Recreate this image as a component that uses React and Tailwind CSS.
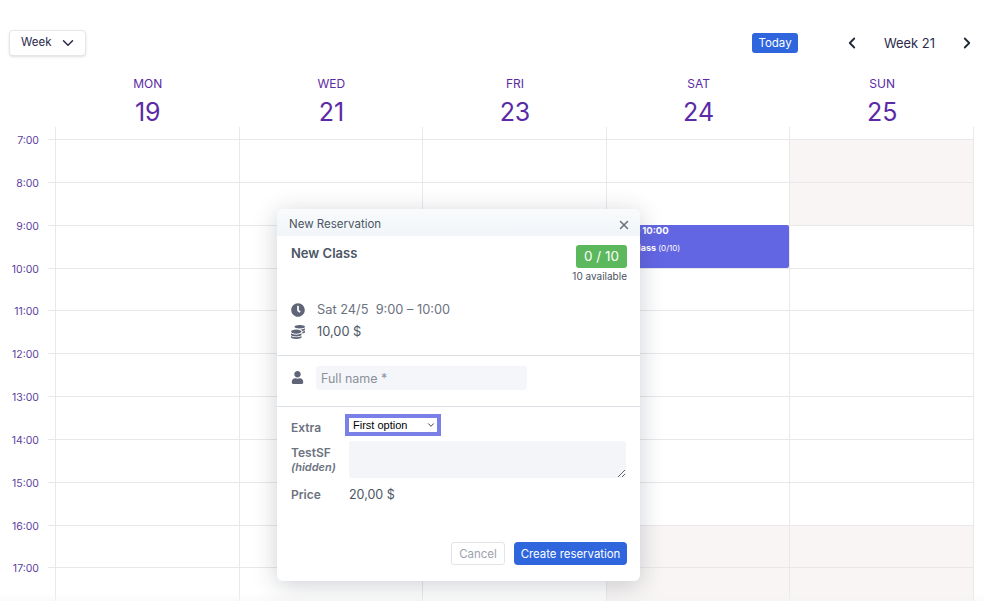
import React from "react";
import { ChevronDown, ChevronLeft, ChevronRight, X } from "lucide-react";
import { FaClock, FaCoins, FaUser } from "react-icons/fa";

const days = [
  ["MON", "19"],
  ["WED", "21"],
  ["FRI", "23"],
  ["SAT", "24"],
  ["SUN", "25"],
];
const hours = ["7:00", "8:00", "9:00", "10:00", "11:00", "12:00", "13:00", "14:00", "15:00", "16:00", "17:00"];
const shaded = {
  SAT: [9, 10, 11],
  SUN: [0, 1, 9, 10, 11],
};

function DayColumn({ name }) {
  const marks = shaded[name] || [];
  return (
    <div className="relative flex-1 min-w-0 border-r border-[#e9e9ec] pt-[12px]">
      {[...hours, ""].map((h, i) => (
        <div
          key={i}
          className={`h-[42.85px] border-t border-[#e8e8eb] ${marks.includes(i) ? "bg-[#f8f5f4]" : "bg-white"}`}
        />
      ))}
      {name === "SAT" && (
        <div className="absolute left-0 right-0 top-[98px] h-[43px] rounded-[2px] bg-[#6366e3] pl-[3px] text-white">
          <div className="pl-[1px] text-[9.5px] font-bold leading-[11px] whitespace-nowrap">9:00 – 10:00</div>
          <div className="mt-[6px] text-[9px] font-bold leading-[12px] whitespace-nowrap">
            New Class <span className="text-[8px] font-normal">(0/10)</span>
          </div>
        </div>
      )}
    </div>
  );
}

export default function App() {
  return (
    <div className="relative h-[601px] w-[984px] overflow-hidden bg-white font-['Inter',sans-serif]">
      <div className="flex items-center pl-[9px] pr-[8px] pt-[30px]">
        <button className="flex h-[26px] w-[77px] items-center rounded-[4px] border border-[#e5e7eb] bg-white pl-[11px] text-[11.5px] text-[#2b2a4c] shadow-sm">
          Week
          <ChevronDown className="ml-[8px] h-[18px] w-[18px]" strokeWidth={2} />
        </button>
        <button className="ml-auto h-[20px] w-[46px] rounded-[3px] bg-[#2f66de] pt-[1px] text-[11.5px] text-white">Today</button>
        <ChevronLeft className="ml-[45px] h-[18px] w-[18px] text-[#1f2937]" strokeWidth={2.4} />
        <span className="w-[97px] pt-[1px] text-center text-[12.9px] text-[#2b2a4c]">Week 21</span>
        <ChevronRight className="h-[18px] w-[18px] text-[#1f2937]" strokeWidth={2.4} />
      </div>

      <div className="ml-[56px] mr-[10px] mt-[20px] flex">
        {days.map(([d, n]) => (
          <div key={d} className="flex-1 text-center text-[#5b2aa6]">
            <div className="text-[12px] leading-[15px]">{d}</div>
            <div className="mt-[6px] text-[25px] leading-[30px]">{n}</div>
          </div>
        ))}
      </div>

      <div className="mr-[10px] flex">
        <div className="w-[56px] shrink-0 border-r border-[#e9e9ec] pt-[12px]">
          {hours.map((h) => (
            <div key={h} className="relative h-[42.85px]">
              <span className="absolute right-[16px] top-[-5px] text-[10.5px] leading-[13px] text-[#5b3fa0]">{h}</span>
              <div className="absolute left-[48px] right-0 top-0 h-px bg-[#e8e8eb]" />
            </div>
          ))}
        </div>
        {days.map(([d]) => (
          <DayColumn key={d} name={d} />
        ))}
      </div>

      <div className="absolute left-0 right-0 bottom-0 h-[8px] bg-gradient-to-b from-transparent to-[#f4f4f4]/50" />

      <div className="absolute left-[277px] top-[209px] w-[363px] rounded-[6px] bg-white shadow-[0_4px_24px_rgba(30,41,59,0.22)]">
        <div className="flex h-[27px] items-center justify-between rounded-t-[6px] bg-gradient-to-b from-[#f9fbfc] to-[#f1f5f9] pl-[12px] pr-[9px] pt-[4px] text-[11.5px] text-[#4b5563]">
          New Reservation
          <X className="h-[14px] w-[14px] text-[#6b7280]" strokeWidth={2.6} />
        </div>

        <div className="flex items-start justify-between pl-[14px] pr-[13px] pt-[9px]">
          <div className="text-[13px] font-semibold leading-[16px] text-[#4b5563]">New Class</div>
          <div className="flex flex-col items-end">
            <div className="flex h-[23px] w-[51px] items-center justify-center rounded-[3px] bg-[#5cb85c] text-[13.5px] text-white">0 / 10</div>
            <div className="mt-[2px] text-[10px] leading-[13px] text-[#4b5563]">10 available</div>
          </div>
        </div>

        <div className="flex flex-col gap-[6px] px-[14px] pt-[19px] text-[12.8px] text-[#6b7280]">
          <div className="flex h-[16px] items-center">
            <FaClock className="h-[14px] w-[14px] text-[#5f6477]" />
            <span className="ml-[12px] whitespace-pre">Sat 24/5  9:00 – 10:00</span>
          </div>
          <div className="flex h-[16px] items-center text-[#4b5563]">
            <FaCoins className="h-[14px] w-[14px] text-[#5f6477]" />
            <span className="ml-[12px]">10,00 $</span>
          </div>
        </div>

        <div className="mt-[15px] flex items-center border-t border-[#dcdfe4] px-[14px] pb-[16px] pt-[10px]">
          <FaUser className="mb-[2px] h-[13px] w-[13px] text-[#5f6477]" />
          <input
            placeholder="Full name *"
            className="ml-[12px] h-[24px] w-[211px] rounded-[3px] bg-[#f5f6fa] px-[5px] text-[12.5px] text-[#4b5563] placeholder:text-[#8b909a] outline-none"
          />
        </div>

        <div className="border-t border-[#dcdfe4] px-[14px] pt-[7px]">
          <div className="flex items-start">
            <div className="w-[54px] pt-[7px] text-[12px] font-semibold leading-[14px] text-[#6b7280]">Extra</div>
            <div className="relative h-[22px] w-[96px] border-[4px] border-[#7b7fe8] bg-white">
              <select className="block h-[14px] w-full appearance-none bg-white pl-[4px] font-['Liberation_Sans',sans-serif] text-[11px] leading-[14px] text-black outline-none" defaultValue="First option">
                <option>First option</option>
              </select>
              <ChevronDown className="pointer-events-none absolute right-[1px] top-[2px] h-[10px] w-[10px] text-[#222]" strokeWidth={2} />
            </div>
          </div>
          <div className="mt-[5px] flex items-start">
            <div className="w-[58px] shrink-0 pt-[5px]">
              <div className="text-[12px] font-semibold leading-[14px] text-[#6b7280]">TestSF</div>
              <div className="mt-[1px] text-[11px] font-semibold italic leading-[13px] text-[#6b7280]">(hidden)</div>
            </div>
            <textarea className="h-[37px] flex-1 rounded-[3px] bg-[#f3f5f9] outline-none" />
          </div>
          <div className="mt-[9px] flex items-center">
            <div className="w-[58px] text-[12px] font-semibold leading-[16px] text-[#6b7280]">Price</div>
            <div className="text-[12.5px] leading-[16px] text-[#4b5563]">20,00 $</div>
          </div>
        </div>

        <div className="mt-[39px] flex justify-end gap-[9px] px-[13px] pb-[16px]">
          <button className="h-[23px] w-[54px] rounded-[3px] border border-[#e2e4e8] bg-white pt-[2px] text-[11.5px] text-[#9ca3af]">Cancel</button>
          <button className="h-[23px] w-[113px] rounded-[4px] bg-[#2f66de] pt-[2px] text-[11.4px] text-white">Create reservation</button>
        </div>
      </div>
    </div>
  );
}
